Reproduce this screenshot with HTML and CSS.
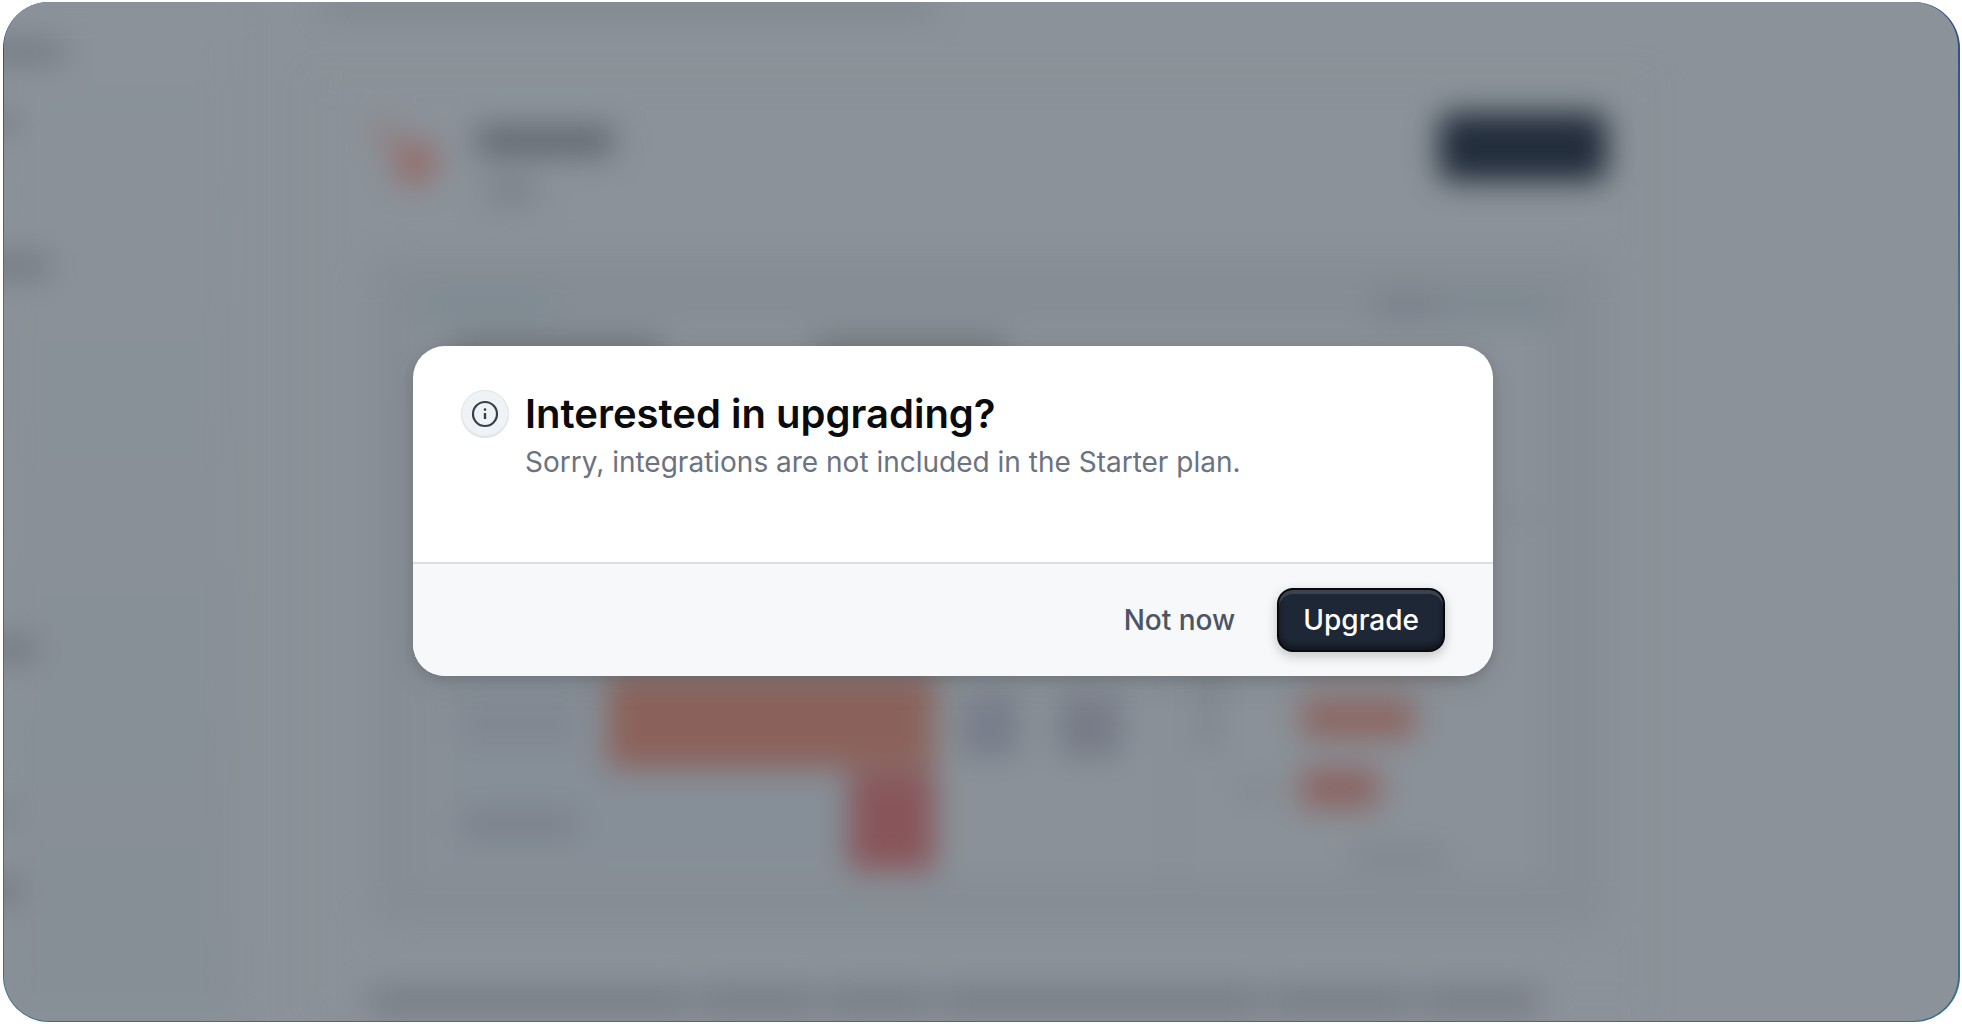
FILE: index.html
```html
<!DOCTYPE html>
<html lang="en">
<head>
  <meta charset="utf-8">
  <title>Interested in upgrading?</title>
  <link rel="stylesheet" href="styles.css">
</head>
<body>
  <div class="frame">
    <div class="window">

      <div class="page" aria-hidden="true">
        <div class="sidebar">
          <svg class="sidebar-items" viewBox="0 0 232 1020">
            <rect x="-30" y="38" width="90" height="24" />
            <rect x="-30" y="110" width="42" height="20" />
            <rect x="-30" y="251" width="76" height="26" />
            <rect x="-30" y="634" width="64" height="26" />
            <rect x="-30" y="804" width="38" height="16" />
            <rect x="-30" y="876" width="48" height="26" />
          </svg>
        </div>
        <div class="main">
          <div class="crumb"></div>
          <div class="card">
            <div class="card-head">
              <svg class="logo" viewBox="0 0 80 80">
                <circle cx="46" cy="49" r="22" fill="#956b69" />
                <path d="M8 12 L42 42" stroke="#917b7a" stroke-width="16" />
              </svg>
              <div class="card-title">
                <div class="bar name"></div>
                <div class="bar kind"></div>
              </div>
              <div class="card-action"></div>
            </div>

            <svg class="preview" viewBox="368 255 1238 670">
              <rect x="424" y="325" width="1116" height="550" fill="#8a9198" />
              <rect x="440" y="675" width="480" height="190" fill="#868e97" />
              <rect x="424" y="293" width="124" height="22" fill="#7a8a92" />
              <rect x="1372" y="292" width="64" height="24" fill="#7a808a" />
              <rect x="1436" y="292" width="114" height="24" fill="#7c8890" />
              <rect x="450" y="336" width="210" height="26" fill="#70767d" />
              <rect x="814" y="336" width="190" height="26" fill="#70787c" />
              <rect x="460" y="702" width="116" height="40" fill="#808791" />
              <rect x="460" y="808" width="116" height="28" fill="#7c828d" />
              <rect x="607" y="674" width="327" height="92" fill="#8b625b" />
              <rect x="848" y="770" width="86" height="98" fill="#88565a" />
              <rect x="960" y="694" width="58" height="60" fill="#777d8a" />
              <rect x="1058" y="694" width="62" height="60" fill="#767b87" />
              <rect x="1170" y="640" width="6" height="240" fill="#888990" />
              <rect x="1202" y="660" width="14" height="90" fill="#7b8188" />
              <rect x="1236" y="778" width="40" height="20" fill="#828990" />
              <rect x="1300" y="640" width="160" height="24" fill="#8b706c" />
              <rect x="1300" y="696" width="114" height="40" fill="#8b6662" />
              <rect x="1300" y="766" width="78" height="40" fill="#8b6462" />
              <rect x="1350" y="844" width="96" height="20" fill="#7f868d" />
              <rect x="1506" y="500" width="16" height="26" fill="#828990" />
            </svg>

            <div class="copy">
              <div class="bar w1"></div>
              <div class="bar w2"></div>
              <div class="bar w3"></div>
              <div class="bar w4"></div>
              <div class="bar w5"></div>
              <div class="bar w6"></div>
            </div>
          </div>
        </div>
      </div>

      <div class="overlay">
        <div class="modal" role="dialog" aria-modal="true" aria-labelledby="modal-title">
          <div class="modal-body">
            <div class="modal-icon">
              <svg viewBox="0 0 28 28" width="28" height="28" fill="none">
                <circle cx="14" cy="14" r="12" stroke="#36404d" stroke-width="2.2" />
                <path d="M14 13 V19" stroke="#36404d" stroke-width="2.4" />
                <circle cx="14" cy="9.6" r="1.3" fill="#36404d" />
              </svg>
            </div>
            <div>
              <h1 id="modal-title">Interested in upgrading?</h1>
              <p>Sorry, integrations are not included in the Starter plan.</p>
            </div>
          </div>
          <div class="modal-footer">
            <button type="button" class="button">Not now</button>
            <button type="button" class="button button-primary">Upgrade</button>
          </div>
        </div>
      </div>

    </div>
  </div>
</body>
</html>
```
FILE: styles.css
```css
* {
  box-sizing: border-box;
}

body {
  margin: 0;
  height: 100vh;
  padding: 2px 2px 2px 3px;
  background-color: #fff;
  font-family: Inter, "Liberation Sans", sans-serif;
}

.frame {
  height: 100%;
  padding: 0 2px 1px 1px;
  border-radius: 46px;
  background: linear-gradient(#2f4a8a, #4a6f93 30%, #35708f 70%, #3a6f8a);
}

.window {
  position: relative;
  height: 100%;
  overflow: hidden;
  border-radius: 45px;
  background-color: #8b9299;
}

/* page behind the dialog */
.page {
  display: flex;
  height: 100%;
  filter: blur(15px);
}

.sidebar {
  flex: none;
  width: 232px;
  background: linear-gradient(#8b9299, #878f96);
}

.sidebar-items {
  display: block;
  overflow: visible;
  fill: #757b83;
}

.main {
  flex: 1;
  padding-left: 76px;
}

.crumb {
  width: 610px;
  height: 8px;
  margin: 0 0 66px 12px;
  background-color: #70777e;
}

.card {
  max-width: 1340px;
  padding: 36px 44px 0 56px;
  border: 1px solid #858c93;
}

.card-head {
  display: flex;
  align-items: flex-start;
  height: 144px;
}

.logo {
  width: 80px;
  height: 80px;
}

.card-title {
  flex: 1;
  padding: 14px 0 0 28px;
}

.bar {
  height: 28px;
  background-color: #787d85;
}

.name {
  width: 136px;
  background-color: #60676f;
}

.kind {
  width: 48px;
  margin: 22px 0 0 10px;
  background-color: #7b8289;
}

.card-action {
  width: 168px;
  height: 68px;
  border-radius: 12px;
  background-color: #222d3b;
}

.preview {
  display: block;
  width: 100%;
  border-radius: 24px;
  background-color: #868d94;
}

.copy {
  display: flex;
  gap: 8px;
  padding: 60px 68px 0 0;
}

.w1 { flex: 27; }
.w2 { flex: 10; }
.w3 { flex: 9; }
.w4 { flex: 27; }
.w5 { flex: 12; }
.w6 { flex: 10; }

/* dialog */
.overlay {
  position: absolute;
  inset: 0;
  display: flex;
  align-items: center;
  justify-content: center;
  padding: 0 56px 2px 0;
}

.modal {
  width: 100%;
  max-width: 1080px;
  overflow: hidden;
  border-radius: 32px;
  background-color: #fff;
  box-shadow: 0 4px 12px rgba(0, 0, 0, 0.12), 0 8px 32px rgba(0, 0, 0, 0.08);
}

.modal-body {
  display: flex;
  gap: 16px;
  padding: 44px 48px 80px;
}

.modal-icon {
  display: flex;
  align-items: center;
  justify-content: center;
  flex: none;
  width: 48px;
  height: 48px;
  border-radius: 50%;
  background-color: #f0f3f6;
  box-shadow: inset 0 0 0 1px #e3e6e9, inset 0 -2px 2px rgba(0, 0, 0, 0.08);
}

h1 {
  margin: 0;
  font-size: 40px;
  font-weight: 600;
  line-height: 48px;
  color: #0a0b0d;
}

p {
  margin: 4px 0 0;
  font-size: 28px;
  line-height: 40px;
  color: #6b7280;
}

.modal-footer {
  display: flex;
  justify-content: flex-end;
  gap: 16px;
  padding: 24px 48px;
  border-top: 2px solid #dcdfe2;
  background-color: #f6f8fa;
}

.button {
  height: 64px;
  padding: 0 24px;
  border: 2px solid transparent;
  border-radius: 16px;
  background: none;
  font-family: inherit;
  font-size: 28px;
  font-weight: 500;
  color: #4b5563;
}

.button-primary {
  border-color: #07090d;
  background-color: #1e2735;
  color: #fff;
  box-shadow: inset 0 4px 0 #3a434f, inset 0 -4px 6px rgba(0, 0, 0, 0.45), 0 4px 12px rgba(0, 0, 0, 0.22);
}
```
